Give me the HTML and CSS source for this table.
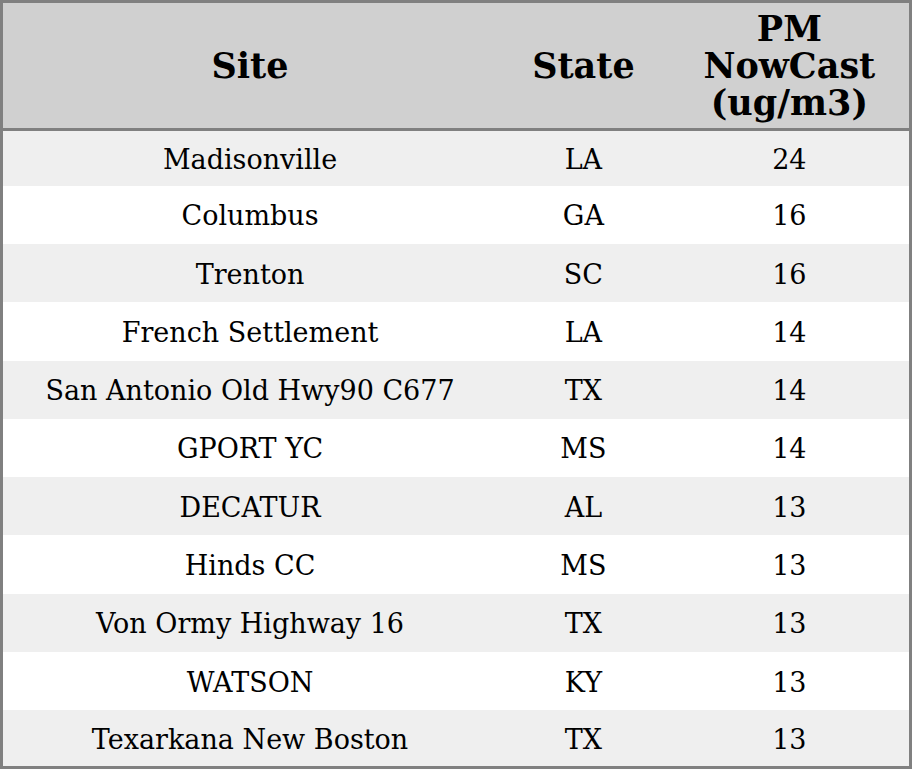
FILE: index.html
```html
<!DOCTYPE html>
<html>
<head>
<meta charset="utf-8">
<link rel="stylesheet" href="styles.css">
</head>
<body>
<table class="aq">
  <colgroup>
    <col class="c-site">
    <col class="c-state">
    <col class="c-pm">
  </colgroup>
  <thead>
    <tr class="head">
      <th>Site</th>
      <th>State</th>
      <th>PM<br>NowCast<br>(ug/m3)</th>
    </tr>
  </thead>
  <tbody>
    <tr><td>Madisonville</td><td>LA</td><td>24</td></tr>
    <tr><td>Columbus</td><td>GA</td><td>16</td></tr>
    <tr><td>Trenton</td><td>SC</td><td>16</td></tr>
    <tr><td>French Settlement</td><td>LA</td><td>14</td></tr>
    <tr><td>San Antonio Old Hwy90 C677</td><td>TX</td><td>14</td></tr>
    <tr><td>GPORT YC</td><td>MS</td><td>14</td></tr>
    <tr><td>DECATUR</td><td>AL</td><td>13</td></tr>
    <tr><td>Hinds CC</td><td>MS</td><td>13</td></tr>
    <tr><td>Von Ormy Highway 16</td><td>TX</td><td>13</td></tr>
    <tr><td>WATSON</td><td>KY</td><td>13</td></tr>
    <tr><td>Texarkana New Boston</td><td>TX</td><td>13</td></tr>
  </tbody>
</table>
</body>
</html>
```
FILE: styles.css
```css
html, body {
  margin: 0;
  padding: 0;
  background: #ffffff;
}
.aq {
  width: 912px;
  height: 769px;
  border-collapse: collapse;
  border: 3px solid #808080;
  font-family: "DejaVu Serif", serif;
  color: #000;
  table-layout: fixed;
}
.c-site { width: 494px; }
.c-state { width: 172px; }
.c-pm { width: 240px; }
.aq .head { height: 128px; }
.aq th {
  background: #d0d0d0;
  font-weight: bold;
  font-size: 35px;
  line-height: 37px;
  text-align: center;
  padding: 0;
  border-bottom: 3px solid #808080;
}
.aq tbody tr { height: 58px; }
.aq tbody tr:first-child { height: 56px; }
.aq tbody tr:last-child { height: 57px; }
.aq td {
  font-size: 27px;
  text-align: center;
  padding: 2px 0 0 0;
}
.aq tbody tr:nth-child(odd) td { background: #efefef; }
.aq tbody tr:nth-child(even) td { background: #ffffff; }
```
